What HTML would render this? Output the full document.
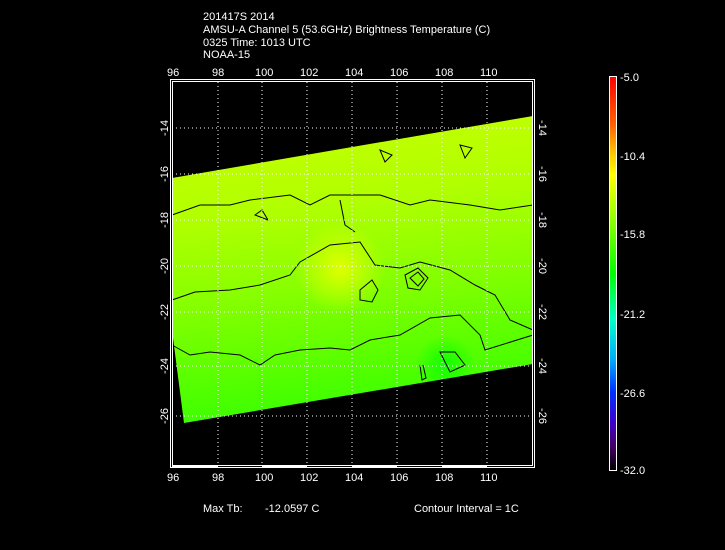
<!DOCTYPE html>
<html><head><style>
html,body{margin:0;padding:0;background:#000;width:725px;height:550px;overflow:hidden}
svg{position:absolute;left:0;top:0}
text{font-family:"Liberation Sans",sans-serif;fill:#fff;font-size:11px}
</style></head><body>
<svg width="725" height="550" viewBox="0 0 725 550">
<defs>
<linearGradient id="g" x1="0" y1="0" x2="0.15" y2="1">
<stop offset="0" stop-color="#c8ff00"/>
<stop offset="0.35" stop-color="#b0ff00"/>
<stop offset="0.6" stop-color="#88ff00"/>
<stop offset="1" stop-color="#3cff00"/>
</linearGradient>
<radialGradient id="y" cx="340" cy="268" r="45" gradientUnits="userSpaceOnUse">
<stop offset="0" stop-color="#e0ff00"/><stop offset="1" stop-color="#e0ff00" stop-opacity="0"/>
</radialGradient>
<radialGradient id="d" cx="445" cy="365" r="30" gradientUnits="userSpaceOnUse">
<stop offset="0" stop-color="#10ff00"/><stop offset="1" stop-color="#10ff00" stop-opacity="0"/>
</radialGradient>
<linearGradient id="cb" x1="0" y1="0" x2="0" y2="1">
<stop offset="0" stop-color="#ff0000"/>
<stop offset="0.12" stop-color="#ff6000"/>
<stop offset="0.2" stop-color="#ffcc00"/>
<stop offset="0.25" stop-color="#ffff00"/>
<stop offset="0.38" stop-color="#80ff00"/>
<stop offset="0.5" stop-color="#00ff00"/>
<stop offset="0.62" stop-color="#00ffcc"/>
<stop offset="0.72" stop-color="#00aaff"/>
<stop offset="0.8" stop-color="#0030ff"/>
<stop offset="0.88" stop-color="#4000cc"/>
<stop offset="0.94" stop-color="#400060"/>
<stop offset="1" stop-color="#000000"/>
</linearGradient>
</defs>
<text x="203" y="20">201417S 2014</text>
<text x="203" y="33">AMSU-A Channel 5 (53.6GHz) Brightness Temperature (C)</text>
<text x="203" y="46">0325 Time: 1013 UTC</text>
<text x="203" y="58">NOAA-15</text>
<!-- data -->
<polygon points="172,178 533,116 533,364 184,423 172,330" fill="url(#g)"/>
<polygon points="172,178 533,116 533,364 184,423 172,330" fill="url(#y)"/>
<polygon points="172,178 533,116 533,364 184,423 172,330" fill="url(#d)"/>
<!-- contours -->
<g fill="none" stroke="#000" stroke-width="1">
<polyline points="172,215 200,205 230,205 250,200 290,195 310,205 330,195 380,195 410,205 430,200 470,205 500,210 533,205"/>
<polyline points="172,300 195,292 230,290 260,285 290,275 300,262 330,245 360,242 375,265 400,268 420,262 450,270 475,285 495,295 510,320 533,330"/>
<polyline points="172,345 190,355 210,352 240,355 260,365 275,355 300,350 330,348 350,350 370,340 400,335 430,318 460,315 480,335 485,350 533,335"/>
<polygon points="360,290 372,280 378,290 372,302 360,300"/>
<polygon points="405,275 418,268 428,278 420,290 408,288"/>
<polygon points="410,278 418,272 424,279 418,286"/>
<polygon points="440,352 455,352 465,365 450,372"/>
<polygon points="380,150 392,155 385,162"/>
<polygon points="460,145 472,148 465,158"/>
<polygon points="255,215 262,210 268,220"/>
<polyline points="340,200 345,225 355,232"/>
<polyline points="420,365 422,380 426,378 423,365"/>
</g>
<!-- grid -->
<g stroke="#fff" stroke-width="1" stroke-dasharray="1,3">
<line x1="218" y1="82" x2="218" y2="465"/><line x1="262" y1="82" x2="262" y2="465"/>
<line x1="307" y1="82" x2="307" y2="465"/><line x1="352" y1="82" x2="352" y2="465"/>
<line x1="397" y1="82" x2="397" y2="465"/><line x1="442" y1="82" x2="442" y2="465"/>
<line x1="487" y1="82" x2="487" y2="465"/>
<line x1="172" y1="128" x2="533" y2="128"/><line x1="172" y1="174" x2="533" y2="174"/>
<line x1="172" y1="220" x2="533" y2="220"/><line x1="172" y1="266" x2="533" y2="266"/>
<line x1="172" y1="312" x2="533" y2="312"/><line x1="172" y1="366" x2="533" y2="366"/>
<line x1="172" y1="416" x2="533" y2="416"/>
</g>
<!-- frame -->
<rect x="170.5" y="79.5" width="364" height="388" fill="none" stroke="#fff"/>
<rect x="172.5" y="81.5" width="360" height="384" fill="none" stroke="#fff"/>
<rect x="172" y="465" width="46" height="2" fill="#fff"/><rect x="262" y="465" width="45" height="2" fill="#fff"/>
<rect x="352" y="465" width="45" height="2" fill="#fff"/><rect x="442" y="465" width="45" height="2" fill="#fff"/>
<g font-size="11">
<text x="167" y="76">96</text><text x="212" y="76">98</text><text x="255" y="76">100</text><text x="300" y="76">102</text><text x="345" y="76">104</text><text x="390" y="76">106</text><text x="435" y="76">108</text><text x="480" y="76">110</text>
<text x="167" y="481">96</text><text x="212" y="481">98</text><text x="255" y="481">100</text><text x="300" y="481">102</text><text x="345" y="481">104</text><text x="390" y="481">106</text><text x="435" y="481">108</text><text x="480" y="481">110</text>
</g>
<g>
<text transform="translate(168,128) rotate(-90)" text-anchor="middle">-14</text>
<text transform="translate(168,174) rotate(-90)" text-anchor="middle">-16</text>
<text transform="translate(168,220) rotate(-90)" text-anchor="middle">-18</text>
<text transform="translate(168,266) rotate(-90)" text-anchor="middle">-20</text>
<text transform="translate(168,312) rotate(-90)" text-anchor="middle">-22</text>
<text transform="translate(168,366) rotate(-90)" text-anchor="middle">-24</text>
<text transform="translate(168,416) rotate(-90)" text-anchor="middle">-26</text>
<text transform="translate(539,128) rotate(90)" text-anchor="middle">-14</text>
<text transform="translate(539,174) rotate(90)" text-anchor="middle">-16</text>
<text transform="translate(539,220) rotate(90)" text-anchor="middle">-18</text>
<text transform="translate(539,266) rotate(90)" text-anchor="middle">-20</text>
<text transform="translate(539,312) rotate(90)" text-anchor="middle">-22</text>
<text transform="translate(539,366) rotate(90)" text-anchor="middle">-24</text>
<text transform="translate(539,416) rotate(90)" text-anchor="middle">-26</text>
</g>
<!-- colorbar -->
<rect x="609.5" y="76.5" width="7" height="394" fill="url(#cb)" stroke="#fff"/>
<g>
<text x="620" y="81">-5.0</text><text x="620" y="160">-10.4</text><text x="620" y="238">-15.8</text>
<text x="620" y="318">-21.2</text><text x="620" y="397">-26.6</text><text x="620" y="474">-32.0</text>
</g>
<text x="203" y="512">Max Tb:</text>
<text x="265" y="512">-12.0597   C</text>
<text x="414" y="512">Contour Interval = 1C</text>
</svg>
</body></html>
